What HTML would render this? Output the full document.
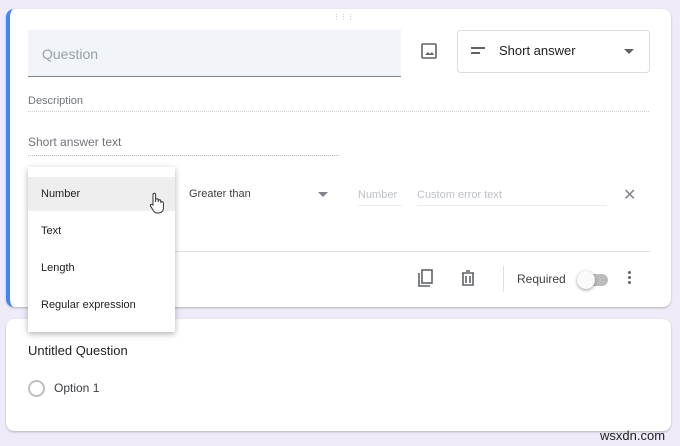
<!DOCTYPE html><html><head><style>
*{margin:0;padding:0;box-sizing:border-box}
body{width:680px;height:446px;background:#efebf8;font-family:"Liberation Sans",sans-serif;position:relative;overflow:hidden;color:#202124}
.card{position:absolute;background:#fff;border-radius:8px;box-shadow:0 1px 2px rgba(0,0,0,.25)}
.a{position:absolute}
.t{position:absolute;white-space:nowrap}
</style></head><body>
<div class="card" style="left:6px;top:9px;width:665px;height:298px;border-left:4px solid #4285f4"></div>
<div class="t" style="left:333px;top:13px;color:#bbb;font-size:7px;letter-spacing:0px">⋮⋮⋮</div>
<div class="a" style="left:28px;top:30px;width:373px;height:47px;background:#f1f4f9;border-bottom:1px solid #80868b"></div>
<div class="t" style="left:42px;top:46px;font-size:14px;color:#9aa0a6">Question</div>
<svg class="a" style="left:420px;top:42px" width="18" height="18" viewBox="0 0 18 18"><rect x="2" y="2" width="14" height="14" rx="1" fill="none" stroke="#5f6368" stroke-width="1.6"/><path d="M5 13l3-3 2 2 2-2 2 3z" fill="#5f6368"/></svg>
<div class="a" style="left:457px;top:30px;width:193px;height:43px;border:1px solid #dadce0;border-radius:4px"></div>
<div class="a" style="left:471px;top:47px;width:14px;height:2px;background:#5f6368"></div>
<div class="a" style="left:471px;top:52px;width:9px;height:2px;background:#5f6368"></div>
<div class="t" style="left:499px;top:43px;font-size:13px;color:#202124">Short answer</div>
<div class="a" style="left:624px;top:49px;border:5px solid transparent;border-top-color:#5f6368"></div>
<div class="t" style="left:28px;top:95px;font-size:11px;color:#70757a">Description</div>
<div class="a" style="left:28px;top:111px;width:621px;border-top:1px dotted #ccc"></div>
<div class="t" style="left:28px;top:135px;font-size:12px;color:#70757a">Short answer text</div>
<div class="a" style="left:28px;top:155px;width:311px;border-top:1px dotted #bbb"></div>
<div class="t" style="left:189px;top:188px;font-size:11px;color:#3c4043">Greater than</div>
<div class="a" style="left:318px;top:192px;border:5px solid transparent;border-top-color:#80868b"></div>
<div class="t" style="left:358px;top:189px;font-size:11px;color:#bdc1c6">Number</div>
<div class="a" style="left:358px;top:205px;width:44px;border-top:1px solid #e8eaed"></div>
<div class="t" style="left:417px;top:189px;font-size:11px;color:#bdc1c6">Custom error text</div>
<div class="a" style="left:417px;top:205px;width:190px;border-top:1px solid #e8eaed"></div>
<div class="t" style="left:623px;top:185px;font-size:16px;color:#80868b">✕</div>
<div class="a" style="left:170px;top:251px;width:480px;border-top:1px solid #e0e0e0"></div>
<svg class="a" style="left:416px;top:268px" width="20" height="20" viewBox="0 0 20 20"><path d="M3 5v13h11" fill="none" stroke="#5f6368" stroke-width="1.6"/><rect x="6" y="2" width="10" height="13" fill="none" stroke="#5f6368" stroke-width="1.6"/></svg>
<svg class="a" style="left:458px;top:268px" width="20" height="20" viewBox="0 0 20 20"><path d="M4 5h12M8 3h4M5 5v12h10V5M8 8v7M12 8v7" fill="none" stroke="#5f6368" stroke-width="1.6"/></svg>
<div class="a" style="left:503px;top:266px;height:26px;border-left:1px solid #e0e0e0"></div>
<div class="t" style="left:517px;top:272px;font-size:12px;color:#3c4043">Required</div>
<div class="a" style="left:580px;top:274px;width:28px;height:12px;border-radius:6px;background:#bdbdbd"></div>
<div class="a" style="left:577px;top:271px;width:18px;height:18px;border-radius:50%;background:#fafafa;box-shadow:0 1px 3px rgba(0,0,0,.4)"></div>
<div class="a" style="left:628px;top:271px;width:3px;height:3px;background:#5f6368;border-radius:50%;box-shadow:0 5px 0 #5f6368,0 10px 0 #5f6368"></div>
<div class="card" style="left:6px;top:319px;width:665px;height:112px"></div>
<div class="t" style="left:28px;top:343px;font-size:13px;color:#202124">Untitled Question</div>
<div class="a" style="left:28px;top:380px;width:17px;height:17px;border:2px solid #bdc1c6;border-radius:50%"></div>
<div class="t" style="left:54px;top:381px;font-size:12px;color:#3c4043">Option 1</div>
<div class="a" style="left:28px;top:167px;width:147px;height:165px;background:#fff;box-shadow:0 2px 6px rgba(0,0,0,.3)"></div>
<div class="a" style="left:28px;top:177px;width:147px;height:34px;background:#eee"></div>
<div class="t" style="left:41px;top:188px;font-size:11px;color:#202124">Number</div>
<div class="t" style="left:41px;top:225px;font-size:11px;color:#202124">Text</div>
<div class="t" style="left:41px;top:262px;font-size:11px;color:#202124">Length</div>
<div class="t" style="left:41px;top:299px;font-size:11px;color:#202124">Regular expression</div>
<svg class="a" style="left:148px;top:191px" width="18" height="24" viewBox="0 0 18 24"><path d="M5 14V3.5a1.3 1.3 0 0 1 2.6 0V11V9a1.3 1.3 0 0 1 2.6 0v2V10a1.3 1.3 0 0 1 2.6 0v2a1.3 1.3 0 0 1 2.6 0v5c0 3-2 5-5 5H9c-2 0-3-1-4-3l-2.5-4a1.2 1.2 0 0 1 2-1.3z" fill="#fff" stroke="#333" stroke-width="1"/></svg>
<div class="t" style="left:600px;top:428px;font-size:13px;color:#222">wsxdn.com</div>
</body></html>
